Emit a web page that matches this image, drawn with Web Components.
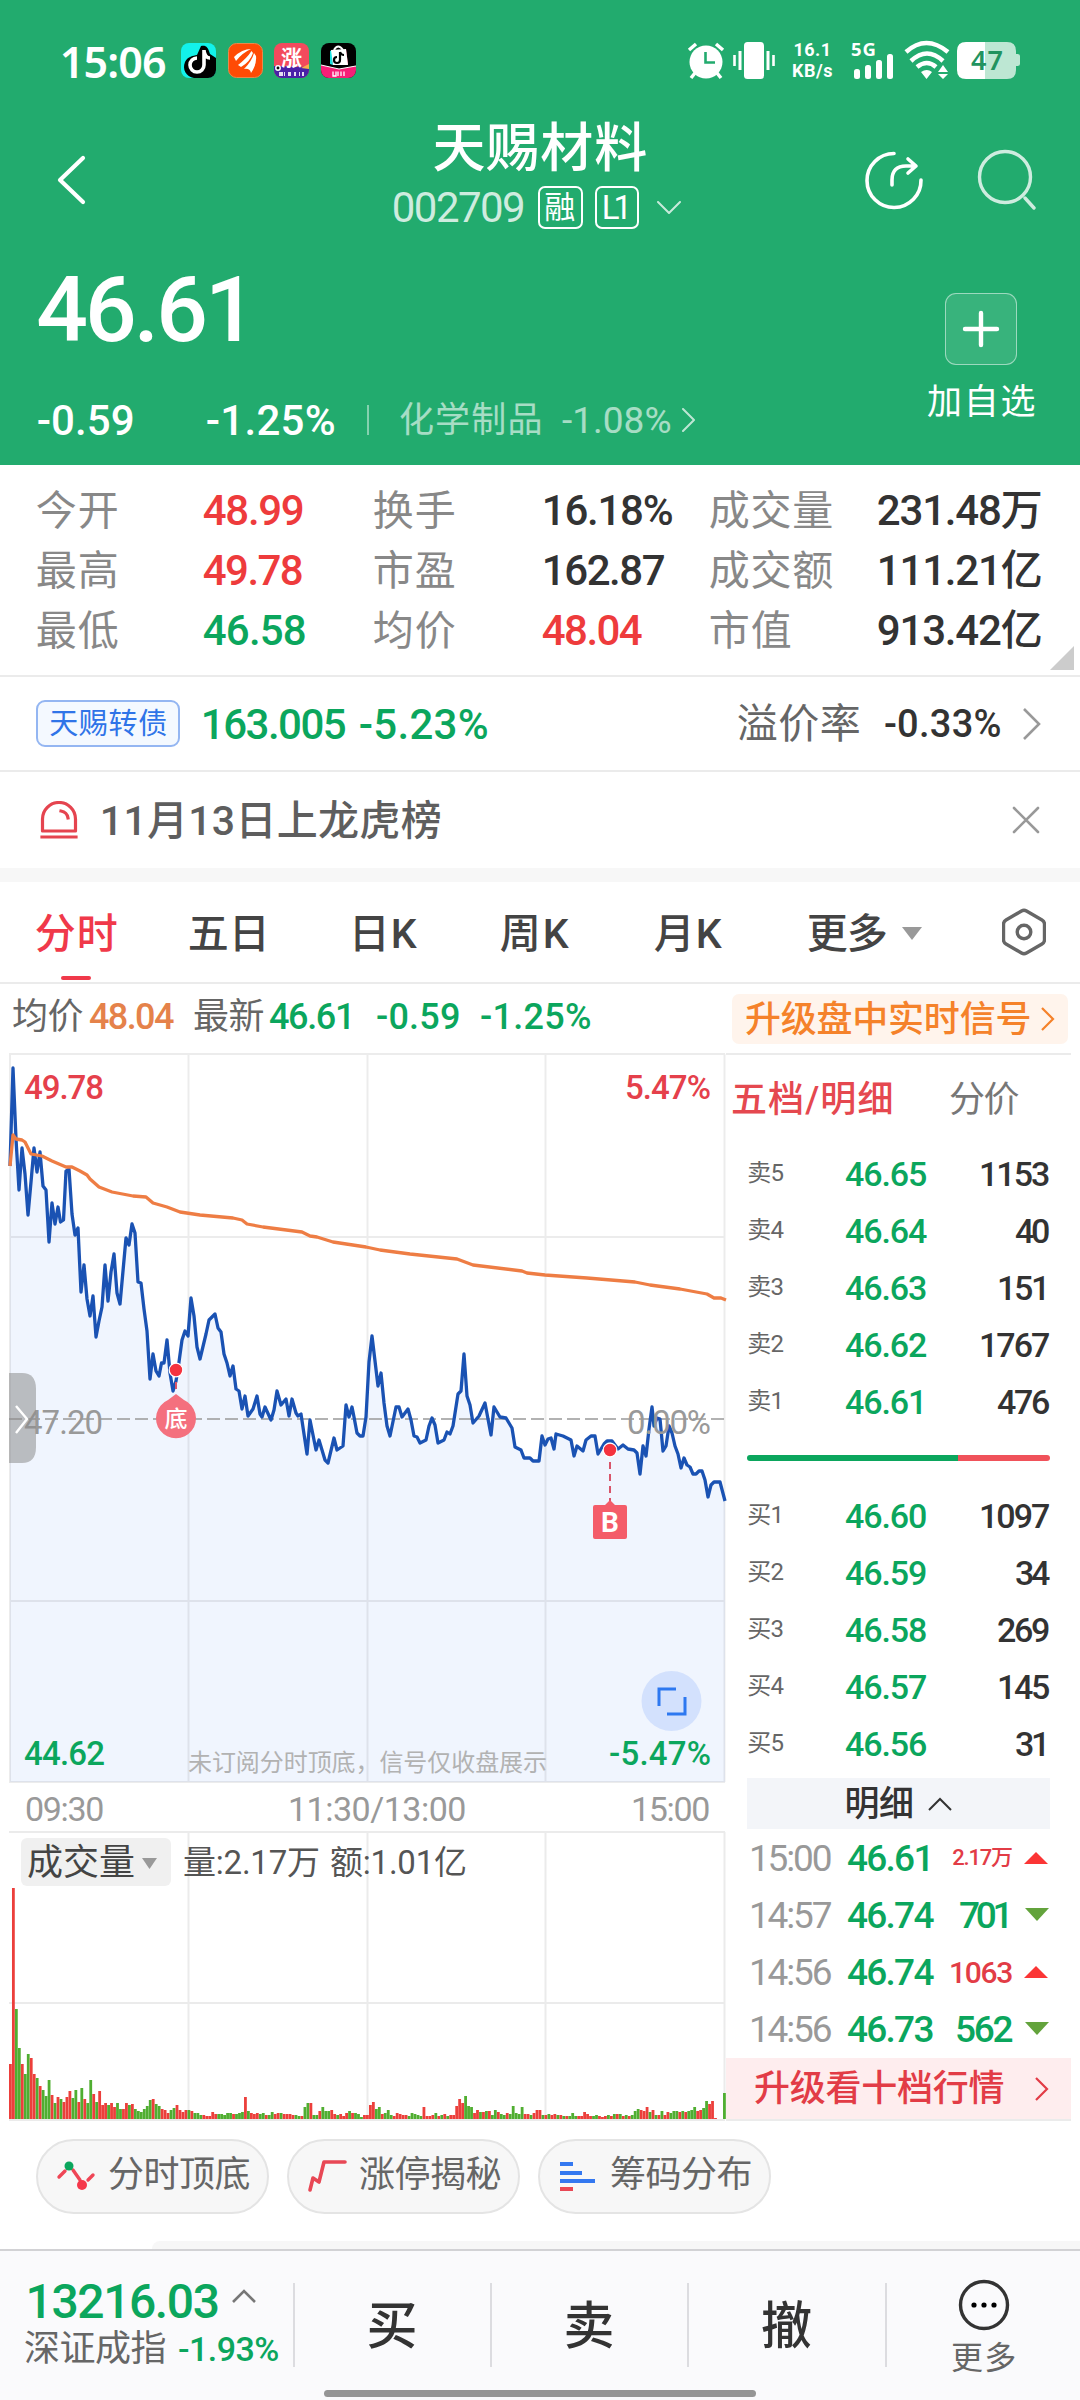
<!DOCTYPE html>
<html lang="zh-CN">
<head>
<meta charset="utf-8">
<title>天赐材料 002709</title>
<style>
    :root {
        --up: #ee3b3c;
        --down: #0ba65d;
        --head: #22ab6e;
        --ink: #333;
        --line: #ebebeb;
    }
    body {
        margin: 0;
        width: 1080px;
        height: 2400px;
        overflow: hidden;
        background: #fff;
        color: var(--ink);
        font-family: Roboto, "Noto Sans CJK SC", sans-serif;
        font-weight: 500;
        display: flex;
        flex-direction: column;
    }
</style>
</head>
<body>
<quote-header></quote-header>
<stat-grid></stat-grid>
<bond-row></bond-row>
<notice-row></notice-row>
<chart-tabs></chart-tabs>
<chart-legend></chart-legend>
<market-panel>
    <price-chart></price-chart>
    <time-axis></time-axis>
    <volume-chart></volume-chart>
    <order-book slot="side"></order-book>
</market-panel>
<tool-chips>
    <tool-chip label="分时顶底">
        <svg width="40" height="34" fill="none" stroke="#ef4656" stroke-width="3.4" stroke-linecap="round"><path d="M3 17l6-6M17 10l7 10M32 20l5-5"/><circle cx="13" cy="6" r="4.5" fill="#0ba65d" stroke="none"/><circle cx="26" cy="25" r="5" fill="#f5374a" stroke="none"/></svg>
    </tool-chip>
    <tool-chip label="涨停揭秘">
        <svg width="40" height="34" fill="none" stroke="#e84855" stroke-width="3.6" stroke-linecap="round" stroke-linejoin="round"><path d="M3 30l3-12 6 4 5-20h21"/></svg>
    </tool-chip>
    <tool-chip label="筹码分布">
        <svg width="40" height="34" stroke-width="4"><path stroke="#3478f0" d="M2 4h13M2 13h22M2 21h35"/><path stroke="#e84855" d="M2 29h13"/></svg>
    </tool-chip>
</tool-chips>
<bottom-bar></bottom-bar>

<script>
// Small helper: registers an element whose shadow root is a static template
function define(name, html) {
    const template = document.createElement('template');
    template.innerHTML = html;
    customElements.define(name, class extends HTMLElement {
        constructor() {
            super();
            this.attachShadow({ mode: 'open' });
            this.shadowRoot.appendChild(template.content.cloneNode(true));
        }
    });
}

// One line of text spread over a fixed width (w) at a given font size
class FitText extends HTMLElement {
    constructor() {
        super();
        this.attachShadow({ mode: 'open' });
        this.shadowRoot.innerHTML = `
            <style>
                :host { display: block; flex: none; white-space: nowrap; line-height: 1.2; }
                span { display: inline-block; margin-left: -0.03em; padding-top: 0.07em; }
            </style>
            <span><slot></slot></span>
        `;
    }

    connectedCallback() {
        const size = Number(this.getAttribute('size'));
        const width = Number(this.getAttribute('w'));
        this.style.fontSize = size + 'px';
        if (!width) return;
        this.style.width = width + 'px';
        const span = this.shadowRoot.querySelector('span');
        const count = this.textContent.length;
        const natural = span.getBoundingClientRect().width;
        if (count > 1) {
            span.style.letterSpacing = (width + size * 0.07 - natural) / (count - 1) + 'px';
        }
    }
}
customElements.define('fit-text', FitText);

define('status-bar', `
    <style>
        :host { display: flex; align-items: center; height: 120px; padding-left: 61px; color: #fff; font-family: "Noto Sans", "Open Sans", sans-serif; }
        svg { display: block; flex: none; overflow: visible; }
        .time { font-weight: 600; margin-right: 16px; }
        .apps { display: flex; gap: 11.5px; flex: none; }
        .right { display: flex; align-items: center; margin-left: 330px; }
        .speed { width: 46px; margin-left: 15px; text-align: center; font: 700 18px/21px Roboto, sans-serif; letter-spacing: .5px; }
    </style>
    <fit-text class="time" size="43" w="104">15:06</fit-text>
    <div class="apps">
        <svg width="35" height="35" viewBox="0 0 35 35">
            <clipPath id="a"><rect width="35" height="35" rx="8"/></clipPath>
            <g clip-path="url(#a)">
                <rect width="35" height="35" fill="#12f2ea"/>
                <path d="M20 3c5-1 7 1 9 8l6 4v20H13C5 34 1 26 4 19c3-6 8-6 12-7z" fill="#000"/>
                <path d="M23 7v15a7 7 0 1 1-7-7M23 8c1 5 3 7 6 7" fill="none" stroke="#fff" stroke-width="3.6"/>
            </g>
        </svg>
        <svg width="35" height="35" viewBox="0 0 35 35">
            <rect x=".5" y=".5" width="34" height="34" rx="8" fill="#ff4b05" stroke="#e8894c"/>
            <path d="M6 14Q14 6 23 6Q14 10 8 18zM10 22Q19 15 23.500 8L25 10Q22 19 13 24zM16 26Q24 18 26 10L28 13Q29 21 23 30Q22 25 16 26z" fill="#fff"/>
        </svg>
        <svg width="35" height="35" viewBox="0 0 35 35">
            <clipPath id="b"><rect width="35" height="35" rx="8"/></clipPath>
            <g clip-path="url(#b)">
                <rect width="35" height="35" fill="#f34a5d"/>
                <path d="M0 23l35 1v11H0z" fill="#4a22a8"/>
                <path d="M27 25l8-4v5z" fill="#f8b04a"/>
                <circle cx="4" cy="25" r="2.2" fill="#111" stroke="#fff" stroke-width="1.5"/>
                <path d="M5 31h4M10 31h1M14 31h3M20 31h2M25 31h1M28 31h2" stroke="#fff" stroke-width="4" opacity=".85"/>
            </g>
            <text x="7" y="22" font-size="21" font-weight="700" fill="#fff" font-family="Noto Sans CJK SC">涨</text>
        </svg>
        <svg width="35" height="35" viewBox="0 0 35 35">
            <clipPath id="c"><rect width="35" height="35" rx="8"/></clipPath>
            <g clip-path="url(#c)">
                <rect width="35" height="35" fill="#000"/>
                <path d="M13 7q4-7 9 0" fill="none" stroke="#fff" stroke-width="2"/>
                <path d="M9 8l2-1 1 15-3-1z" fill="#18e0e0"/><path d="M25 6l2 15-3 1z" fill="#f33b6c"/>
                <path d="M10 7l15-1 2 16H12z" fill="#fff"/>
                <path d="M19 9v8a3 3 0 1 1-3-3M19 9q1 3 4 3" fill="none" stroke="#000" stroke-width="2.2"/>
                <path d="M0 22l18 4 17-3v12H0z" fill="#f71f77"/>
                <path d="M0 22l18 4 17-3" fill="none" stroke="#fff"/>
                <path d="M12 28.500v4.500h3v-4.500M17 28.500v4.500M20 28.500v4.500M23 28.500v4.500" fill="none" stroke="#fff" stroke-width="1.300"/>
            </g>
        </svg>
    </div>
    <div class="right">
        <svg width="40" height="38" viewBox="0 0 40 38">
            <circle cx="20" cy="21" r="16.500" fill="#fff"/>
            <path d="M3 9l7-6M37 9l-7-6M9 32l-4 5M31 32l4 5" stroke="#fff" stroke-width="3.500"/>
            <path d="M19.500 11v10.500H29" fill="none" stroke="#22ab6e" stroke-width="2.600"/>
        </svg>
        <svg width="42" height="38" viewBox="0 0 42 38" style="margin-left:7px">
            <rect x="11" y="1" width="20" height="37" rx="3.500" fill="#fff"/>
            <path d="M7 10v19M35 10v19" stroke="#fff" stroke-width="3"/>
            <path d="M1.500 14v11M40.500 14v11" stroke="#fff" stroke-width="2.600"/>
        </svg>
        <div class="speed"><div>16.1</div><div>KB/s</div></div>
        <svg width="46" height="38" viewBox="0 0 46 38" style="margin-left:15px" fill="#fff">
            <text x="0" y="15" font-size="18.500" font-weight="700" textLength="25">5G</text>
            <rect x="3" y="28" width="6" height="10" rx="2.500"/><rect x="14" y="24" width="6" height="14" rx="2.500"/>
            <rect x="25" y="19" width="6" height="19" rx="2.500"/><rect x="36" y="13" width="6" height="25" rx="2.500"/>
        </svg>
        <svg width="46" height="38" viewBox="0 0 46 38" style="margin-left:7px">
            <path d="M2 11Q22-7 44 11M7 20Q23 5 39 20M13 26Q23 18 32 26" fill="none" stroke="#fff" stroke-width="4.500"/>
            <path d="M17 31q6-4 11 0l-5.500 7zM34 31l5-7 5 7zM34 33h10l-5 5z" fill="#fff"/>
        </svg>
        <svg width="64" height="38" viewBox="0 0 64 38" style="margin-left:7px">
            <path d="M28 1h22q9 0 9 9v3h1.500q2.500 0 2.500 2v8q0 2-2.500 2H59v4q0 9-9 9H28z" fill="#bde7d3"/>
            <path d="M28 1H9Q0 1 0 10v19q0 9 9 9h19z" fill="#fff"/>
            <text x="14" y="29" font-size="27" font-weight="600" fill="#22935f" textLength="32">47</text>
        </svg>
    </div>
`);

define('quote-header', `
    <style>
        :host { display: block; height: 465px; flex: none; background: var(--head); color: #fff; }
        svg { display: block; flex: none; fill: none; stroke: #fff; stroke-linecap: round; stroke-linejoin: round; }
        nav { display: grid; grid-template-columns: 393px 289px 1fr; height: 120px; align-items: center; }
        .title { height: 120px; }
        .name { height: 56px; display: flex; align-items: center; padding-left: 41px; }
        .sub { height: 62px; display: flex; align-items: center; color: rgba(255,255,255,.78); font-weight: 400; }
        .tag { box-sizing: border-box; width: 45px; height: 43px; border: 2px solid #fff; border-radius: 7px; color: #fff; display: flex; align-items: center; justify-content: center; }
        .actions { display: flex; gap: 51px; padding-left: 181px; }
        .quote { display: flex; }
        .left { width: 906px; }
        .price { height: 135px; display: flex; align-items: center; padding-left: 39px; }
        .change { height: 90px; display: flex; align-items: center; padding-left: 38px; }
        .sector { opacity: .6; font-weight: 400; }
        hr { width: 2px; height: 30px; margin: 0 31px 0 33px; border: 0; background: rgba(255,255,255,.45); }
        .add { display: flex; flex-direction: column; align-items: center; width: 150px; padding-top: 53px; font-weight: 400; }
        .plus { box-sizing: border-box; width: 72px; height: 72px; border: 1.500px solid rgba(255,255,255,.5); border-radius: 11px; background: rgba(255,255,255,.1); display: grid; place-items: center; margin-bottom: 15px; }
    </style>
    <status-bar></status-bar>
    <nav>
        <svg width="30" height="52" viewBox="0 0 30 52" stroke-width="4.200" style="margin-left:57px"><path d="M26 4L3 26l23 22"/></svg>
        <div class="title">
            <div class="name"><fit-text size="53" w="211">天赐材料</fit-text></div>
            <div class="sub">
                <fit-text size="42" w="131">002709</fit-text>
                <div class="tag" style="margin:0 12px 0 14px"><fit-text size="31" w="30">融</fit-text></div>
                <div class="tag"><fit-text size="33" w="28">L1</fit-text></div>
                <svg width="26" height="15" viewBox="0 0 26 15" stroke-width="2" style="margin-left:17px;opacity:.75"><path d="M2 2l11 11L24 2"/></svg>
            </div>
        </div>
        <div class="actions">
            <svg width="62" height="62" viewBox="0 0 62 62" stroke-width="3.600">
                <path d="M31 4.500A27 27 0 1 0 58 31"/><path d="M29 36v-5q0-14 14-14h9M45 10l8 7-8 7"/>
            </svg>
            <svg width="62" height="62" viewBox="0 0 62 62" stroke-width="3.400" opacity=".78"><circle cx="29" cy="28" r="25.500"/><path d="M49 49l9 10"/></svg>
        </div>
    </nav>
    <div class="quote">
        <div class="left">
            <div class="price"><fit-text size="91" w="214">46.61</fit-text></div>
            <div class="change">
                <fit-text size="42" w="95">-0.59</fit-text>
                <fit-text size="42" w="127" style="margin-left:74px">-1.25%</fit-text>
                <hr>
                <fit-text class="sector" size="35" w="141">化学制品</fit-text>
                <fit-text class="sector" size="37" w="107" style="margin-left:22px">-1.08%</fit-text>
                <svg width="16" height="26" viewBox="0 0 16 26" stroke-width="2" style="margin-left:11px;opacity:.7"><path d="M2 2l11 11L2 24"/></svg>
            </div>
        </div>
        <div class="add">
            <div class="plus"><svg width="38" height="38" viewBox="0 0 38 38" stroke-width="4.400"><path d="M19 3v32M3 19h32"/></svg></div>
            <fit-text size="35" w="106">加自选</fit-text>
        </div>
    </div>
`);

class StatGrid extends HTMLElement {
    constructor() {
        super();
        // label, value, value width, value colour
        const stats = [
            ['今开', '48.99', 99, 'var(--up)'], ['换手', '16.18%', 129, ''], ['成交量', '231.48万', 163, ''],
            ['最高', '49.78', 98, 'var(--up)'], ['市盈', '162.87', 121, ''], ['成交额', '111.21亿', 163, ''],
            ['最低', '46.58', 101, 'var(--down)'], ['均价', '48.04', 98, 'var(--up)'], ['市值', '913.42亿', 163, '']
        ];
        this.attachShadow({ mode: 'open' });
        this.shadowRoot.innerHTML = `
            <style>
                :host { box-sizing: border-box; flex: none; display: grid; grid-template-columns: 167px 170px 169px 167px 168px 1fr; grid-auto-rows: 60px; align-items: center; height: 212px; padding: 15px 0 0 37px; border-bottom: 2px solid var(--line); position: relative; }
                .label { color: #888; font-weight: 400; }
                i { position: absolute; right: 6px; bottom: 5px; border: 12px solid; border-color: transparent #ccc #ccc transparent; }
            </style>
            ${stats.map(([label, value, w, color]) => `
                <fit-text class="label" size="41" w="${label.length * 41.5 - 3}">${label}</fit-text>
                <fit-text size="42" w="${w}" style="color:${color}">${value}</fit-text>
            `).join('')}
            <i></i>
        `;
    }
}
customElements.define('stat-grid', StatGrid);

define('bond-row', `
    <style>
        :host { box-sizing: border-box; flex: none; display: flex; align-items: center; height: 95px; padding: 0 38px 0 36px; border-bottom: 2px solid var(--line); color: var(--down); }
        .tag { box-sizing: border-box; height: 47px; border: 2px solid #94b6f2; border-radius: 9px; background: #f4f9ff; color: #2f74e8; padding: 0 12px; display: flex; align-items: center; font-weight: 400; margin-right: 22px; }
        .label { margin-left: auto; color: #666; font-weight: 400; }
    </style>
    <div class="tag"><fit-text size="29" w="116">天赐转债</fit-text></div>
    <fit-text size="42" w="143">163.005</fit-text>
    <fit-text size="42" w="127" style="margin-left:15px">-5.23%</fit-text>
    <fit-text class="label" size="41" w="121">溢价率</fit-text>
    <fit-text size="38" w="115" style="margin:0 22px 0 26px;color:var(--ink)">-0.33%</fit-text>
    <svg width="20" height="34" fill="none" stroke="#999" stroke-width="2.600"><path d="M2 2l15 15L2 32"/></svg>
`);

define('notice-row', `
    <style>
        :host { flex: none; display: flex; align-items: center; height: 96px; padding: 0 40px; border-bottom: 14px solid #f7f7f7; color: #5e5e5e; }
        svg { fill: none; stroke: #999; stroke-width: 2.600; stroke-linecap: round; }
    </style>
    <svg width="38" height="38" style="stroke:#e5444f;stroke-width:3.200"><path d="M2.500 30V18a16 16 0 0 1 33 0v12zM2 36h34M21 10q6 1 7 7" stroke-linecap="square" stroke-linejoin="round"/></svg>
    <fit-text size="41" w="339" style="margin-left:23px">11月13日上龙虎榜</fit-text>
    <svg width="28" height="28" style="margin-left:auto"><path d="M2 2l24 24M26 2L2 26"/></svg>
`);

define('chart-tabs', `
    <style>
        :host { box-sizing: border-box; flex: none; display: flex; align-items: center; height: 102px; padding: 3px 34px 0 36px; border-bottom: 2px solid var(--line); color: #444; }
        .active { color: #f0394a; position: relative; }
        .active::after { content: ""; position: absolute; left: 25px; top: 69px; width: 30px; height: 4px; border-radius: 2px; background: #f0394a; }
        b { border: 10.500px solid transparent; border-top: 13px solid #999; border-bottom: 0; margin-left: 16px; }
    </style>
    <fit-text class="active" size="41" w="80">分时</fit-text>
    <fit-text size="41" w="79" style="margin-left:73px">五日</fit-text>
    <fit-text size="41" w="65" style="margin-left:82px">日K</fit-text>
    <fit-text size="41" w="66" style="margin-left:86px">周K</fit-text>
    <fit-text size="41" w="65" style="margin-left:88px">月K</fit-text>
    <fit-text size="41" w="78" style="margin-left:88px">更多</fit-text>
    <b></b>
    <svg width="44" height="48" style="margin-left:auto;margin-top:-3px" fill="none" stroke="#666" stroke-width="3.400" stroke-linejoin="round"><path d="M19.500 3q2.500-1.500 5 0l15.500 9q2.500 1.500 2.500 4v16q0 2.500-2.500 4l-15.500 9q-2.500 1.500-5 0L4 36q-2.500-1.500-2.500-4V16q0-2.500 2.500-4z"/><circle cx="22" cy="24" r="6.800"/></svg>
`);

define('chart-legend', `
    <style>
        :host { box-sizing: border-box; flex: none; display: flex; align-items: center; height: 70px; padding: 0 12px 0 13px; color: var(--down); }
        fit-text { margin-bottom: 5px; }
        .label { color: #666; font-weight: 400; }
        .signal { box-sizing: border-box; display: flex; align-items: center; width: 336px; height: 50px; margin-left: auto; padding-left: 14px; border-radius: 7px; background: #fff4ec; color: #f5822a; }
        .signal fit-text { margin: 0; }
    </style>
    <fit-text class="label" size="36" w="69">均价</fit-text>
    <fit-text size="36" w="83" style="margin-left:8px;color:#e5824a">48.04</fit-text>
    <fit-text class="label" size="36" w="69" style="margin-left:21px">最新</fit-text>
    <fit-text size="36" w="84" style="margin-left:7px">46.61</fit-text>
    <fit-text size="36" w="82" style="margin-left:23px">-0.59</fit-text>
    <fit-text size="36" w="109" style="margin-left:22px">-1.25%</fit-text>
    <div class="signal">
        <fit-text size="36" w="284">升级盘中实时信号</fit-text>
        <svg width="16" height="26" style="margin-left:10px" fill="none" stroke="#f5822a" stroke-width="2.200"><path d="M2 2l11 11L2 24"/></svg>
    </div>
`);

define('market-panel', `
    <style>
        :host { flex: none; display: flex; height: 1065px; padding-left: 9px; }
        .charts { width: 717px; display: flex; flex-direction: column; }
    </style>
    <div class="charts"><slot></slot></div>
    <slot name="side"></slot>
`);

// Intraday price, x/y in chart pixels
const pricePoints = `1,112 4,14 7,85 10,136 13,94 16,120 19,161 22,128 25,94 28,118 31,98 34,132 37,136 40,188 43,149 46,170 49,153
    51.5,168 54.5,166 57,117 60,115 63,160 66,181 69,174 72,238 75,211 78,245 81,262 84,242 87,283 90,267 93,253 96,211 99,247
    102,218 105,200 108,239 111,250 114,217 117,184 120,191 123,170 126,179 129,228 132,229 135,255 138,277 141,325 144,300
    147,317 150,322 152.5,309 155,309 158,286 161,319 164,337 167,327 170,308 173,286 176,277 179,282 182,244 185,262 188,293
    191,305 197,280 200,266 206,260 209,274 212,278 215,300 218,309 221,322 224,312 227,335 230,337 233,355 236,342 239,362
    244,355 248,342 251,360 253,363 256,353 262,366 265,356 268,337 272,351 277,345 280,362 283,345 287,359 289,362 292,360
    298,400 301,366 307,396 310,386 316,406 319,409 325,384 328,396 334,392 337,351 340,363 343,353 345,363 348,379 351,382
    354,382 357,363 360,308 363,282 369,332 372,319 375,349 378,372 381,382 387,353 390,353 393,363 399,355 402,366 405,382
    408,383 411,389 417,386 420,372 423,364 426,371 429,389 435,386 438,378 441,380 444,372 449,340 452,337 455,300 458,342
    461,351 464,369 470,362 476,349 482,381 485,353 491,363 497,364 503,374 506,393 512,396 515,404 521,404 524,407 530,407
    533,382 536,391 539,385 542,384 545,395 547,380 554,382 562,386 565,402 568,392 574,397 577,386 582,382 586,382 589,400
    595,390 598,387 603,387 609,395 614,391 619,395 625,396 628,399 631,420 634,392 637,402 640,375 643,353 645,372 648,364
    651,365 654,397 657,392 660,372 663,379 666,392 669,400 672,414 675,404 678,411 681,413 684,420 687,420 690,417 693,417
    696,426 699,443 702,431 705,428 711,428 716,447`;

const averagePoints = `1,112 4,81 7,85 13,86 16,88 22,100 33,102 43,107 57,113 63,113 71,117 78,121 81,125 90,133 103,138 124,142
    137,143 144,149 158,153 171,158 191,161 224,164 233,166 238,170 254,173 293,178 301,182 308,183 324,188 357,193 371,196
    401,200 448,205 464,211 513,217 518,219 536,221 578,224 626,228 641,231 671,235 698,240 705,244 712,244 717,246`;

define('price-chart', `
    <style>
        :host { display: block; height: 728px; }
        svg { display: block; overflow: visible; }
        text { font-size: 33px; }
    </style>
    <svg width="716" height="728" viewBox="0 0 716 728">
        <polygon points="${pricePoints} 716,728 1,728" fill="#f0f5fe"/>
        <path d="M0 0h716M1 0v728M179.500 0v728M358.500 0v728M536.500 0v728M715.500 0v728M0 183h716M0 547h716M0 728h716" fill="none" stroke="#000" stroke-opacity=".075" stroke-width="2"/>
        <path d="M0 365h716" stroke="#999" stroke-width="1.600" stroke-dasharray="13 5"/>
        <polyline points="${pricePoints}" fill="none" stroke="#1a52b3" stroke-width="3.300" stroke-linejoin="round"/>
        <polyline points="${averagePoints}" fill="none" stroke="#ee7d44" stroke-width="3.300" stroke-linejoin="round"/>
        <text x="15" y="45" textLength="80" fill="#e5404b">49.78</text>
        <text x="616" y="45" textLength="86" fill="#e5404b">5.47%</text>
        <text x="15" y="380" textLength="79" fill="#999" font-weight="400">47.20</text>
        <text x="618" y="380" textLength="84" fill="#999" font-weight="400">0.00%</text>
        <text x="15" y="711" textLength="81" fill="#0ba65d">44.62</text>
        <text x="600" y="711" textLength="102" fill="#0ba65d">-5.47%</text>
        <text x="179" y="717" textLength="359" fill="#b2b2b2" font-weight="400" style="font-size:24px">未订阅分时顶底，信号仅收盘展示</text>
        <path d="M167 316v24M601 396v52" stroke="#d8556a" stroke-width="2" stroke-dasharray="7 5"/>
        <circle cx="167" cy="316" r="6.800" fill="#f5333f" stroke="#fff" stroke-width="1.200"/>
        <circle cx="601" cy="396" r="6.800" fill="#f5333f" stroke="#fff" stroke-width="1.200"/>
        <path d="M167 340l8 6a20 20 0 1 1-16 0z" fill="#f4707e"/>
        <text x="155.500" y="373" fill="#fff" style="font-size:23px">底</text>
        <path d="M584 453q0-2 2-2h10l5-5 5 5h10q2 0 2 2v30q0 2-2 2h-30q-2 0-2-2z" fill="#f45c69"/>
        <text x="592" y="478" fill="#fff" font-weight="700" style="font-size:28px">B</text>
        <circle cx="662.500" cy="647" r="30" fill="#d3e1fd"/>
        <path d="M650 652v-17h17M676 643v17h-18" fill="none" stroke="#2d78f0" stroke-width="3"/>
        <path d="M0 319h13q14 0 14 16v58q0 16-14 16H0z" fill="#8c8c8c" fill-opacity=".55"/>
        <path d="M7 352l11 13-11 14" fill="none" stroke="#fff" stroke-width="2.400"/>
    </svg>
`);

define('time-axis', `
    <style>
        :host { display: flex; align-items: center; height: 50px; padding: 2px 17px 0; box-sizing: border-box; color: #999; font-weight: 400; }
    </style>
    <fit-text size="34" w="77">09:30</fit-text>
    <fit-text size="34" w="176" style="margin-left:186px">11:30/13:00</fit-text>
    <fit-text size="34" w="77" style="margin-left:auto">15:00</fit-text>
`);

class VolumeChart extends HTMLElement {
    constructor() {
        super();
        // One bar per minute: colour letter and height
        const bars = ('r55 r231 g110 g71 r55 g45 g65 r61 r45 g41 r33 g29 g23 g39 r24 g16 r22 g20 r17 r22 r28 g21 g29 r17 g31 r20 g16 g39 r25 g17 '
            + 'r28 r14 r16 g14 r16 r12 g16 g10 r10 r16 g14 r15 g10 g8 g7 g10 g13 g19 r20 g15 g13 r10 r9 r6 g9 g11 r14 r9 r7 r9 '
            + 'g9 r8 g6 g6 g4 r4 r3 r3 r7 r5 g5 g5 g4 g6 g6 r5 g5 g6 g7 r22 g8 r6 r5 r6 g5 g6 r4 g4 g7 r5 r6 g6 r5 r5 r5 r4 g4 g3 r3 '
            + 'g12 g16 r16 g4 g4 r8 g12 g8 g8 r9 r5 g4 r5 r3 r6 g8 r6 g6 g5 g2 r4 r4 r14 r17 g10 g12 r5 g6 g9 g4 r3 r6 r5 r4 r4 g3 '
            + 'g6 g5 g4 g3 r12 r3 r3 r4 g6 r3 g4 r5 g3 r4 r4 r13 r20 r16 g23 g13 g12 r6 r9 g7 r7 g8 r8 g4 g9 r7 g5 g4 r6 g5 g13 g6 g5 g12 '
            + 'r5 r5 g4 r6 r9 r9 g4 r4 g5 r4 r5 g4 r4 g3 r3 g3 g6 g3 r3 r3 r7 r5 r3 g3 g4 r3 r2 r3 g4 r3 g5 r5 g5 r3 g4 r3 g4 g8 g10 r9 r8 '
            + 'r12 g7 r9 g4 r4 g8 r4 r7 g6 g8 g8 r7 g8 r7 g8 g9 g12 r8 r9 g11 g18 r15 r18 r1 g0 g0 g26').split(' ');
        const step = 717 / bars.length;
        this.attachShadow({ mode: 'open' });
        this.shadowRoot.innerHTML = `
            <style>
                :host { display: block; height: 287px; }
                svg { display: block; overflow: visible; }
            </style>
            <svg width="716" height="287" viewBox="0 0 716 287">
                <path d="M0 0h716M179.500 0v287M358.500 0v287M536.500 0v287M715.500 0v287M0 171h716M0 288h716" fill="none" stroke="#ebebeb" stroke-width="2"/>
                ${bars.map((bar, i) => `<rect x="${(i * step).toFixed(2)}" y="${287 - bar.slice(1)}" width="2.800" height="${bar.slice(1)}" fill="${bar[0] === 'r' ? '#ec3f3b' : '#50ae31'}"/>`).join('')}
                <rect x="12" y="6" width="150" height="48" rx="6" fill="#f0f0f0"/>
                <text x="18" y="43" font-size="36" font-weight="400" fill="#444" textLength="108">成交量</text>
                <path d="M133 26h15l-7.500 11z" fill="#999"/>
                <text x="174" y="42" font-size="33" font-weight="400" fill="#555" textLength="137">量:2.17万</text>
                <text x="321" y="42" font-size="33" font-weight="400" fill="#555" textLength="137">额:1.01亿</text>
            </svg>
        `;
    }
}
customElements.define('volume-chart', VolumeChart);

class OrderBook extends HTMLElement {
    constructor() {
        super();
        const sells = [['卖5', '46.65', '1153'], ['卖4', '46.64', '40'], ['卖3', '46.63', '151'], ['卖2', '46.62', '1767'], ['卖1', '46.61', '476']];
        const buys = [['买1', '46.60', '1097'], ['买2', '46.59', '34'], ['买3', '46.58', '269'], ['买4', '46.57', '145'], ['买5', '46.56', '31']];
        // time, price, volume, volume font size, volume width, direction
        const ticks = [
            ['15:00', '46.61', '2.17万', 22, 59, 'up'], ['14:57', '46.74', '701', 37, 52, 'down'],
            ['14:56', '46.74', '1063', 30, 62, 'up'], ['14:56', '46.73', '562', 37, 56, 'down']
        ];
        const level = ([label, price, qty]) => `
            <div class="row level">
                <fit-text class="label" size="24" w="35">${label}</fit-text>
                <fit-text class="price" size="34" w="80">${price}</fit-text>
                <fit-text class="qty" size="34" w="${qty.length * 18 - 3}">${qty}</fit-text>
            </div>`;
        this.attachShadow({ mode: 'open' });
        this.shadowRoot.innerHTML = `
            <style>
                :host { display: block; width: 345px; border-top: 2px solid var(--line); margin-top: -1px; }
                .tabs { display: flex; align-items: center; height: 89.500px; padding-left: 6px; color: #e5484f; }
                .row { display: flex; align-items: center; height: 57px; }
                .level { padding: 0 22px; }
                .label { color: #666; font-weight: 400; }
                .price { color: var(--down); margin-left: 63px; }
                .qty { margin-left: auto; }
                .ratio { width: 303px; height: 6px; border-radius: 3px; margin-left: 21px; background: linear-gradient(to right, #0ba65d 211px, #f0525a 211px); }
                .detail { display: flex; align-items: center; justify-content: center; gap: 15px; width: 303px; height: 51px; margin: 6.500px 0 0 21px; background: #f3f5f9; }
                .time { color: #999; font-weight: 400; margin-left: 24px; }
                .tick .price { margin-left: 17px; }
                .tick b { width: 24px; margin: 0 23px 0 12px; }
                .tick b::before { content: ""; display: block; width: 0; border: 12px solid transparent; }
                .up b::before { border-top: 0; border-bottom: 12px solid #fb3535; }
                .down b::before { border-bottom: 0; border-top: 13px solid #63a33c; margin-left: 1px; }
                .up .qty { color: #e23c46; }
                .down .qty { color: var(--down); }
                .more { display: flex; align-items: center; justify-content: space-between; height: 61px; padding: 0 21px 0 29px; margin-top: 1px; background: #feedee; border-bottom: 2px solid var(--line); color: #e23c46; }
            </style>
            <div class="tabs">
                <fit-text size="36" w="160">五档/明细</fit-text>
                <fit-text size="36" w="68" style="margin-left:58px;color:#777;font-weight:400">分价</fit-text>
            </div>
            ${sells.map(level).join('')}
            <div class="row"><div class="ratio"></div></div>
            ${buys.map(level).join('')}
            <div class="detail">
                <fit-text size="35" w="67">明细</fit-text>
                <svg width="24" height="14" fill="none" stroke="#333" stroke-width="2"><path d="M1 13L12 2l11 11"/></svg>
            </div>
            ${ticks.map(([time, price, qty, size, w, dir]) => `
                <div class="row tick ${dir}">
                    <fit-text class="time" size="37" w="81">${time}</fit-text>
                    <fit-text class="price" size="37" w="85">${price}</fit-text>
                    <fit-text class="qty" size="${size}" w="${w}">${qty}</fit-text>
                    <b></b>
                </div>`).join('')}
            <div class="more">
                <fit-text size="36" w="248">升级看十档行情</fit-text>
                <svg width="16" height="26" fill="none" stroke="#e23c46" stroke-width="2.200"><path d="M2 2l11 11L2 24"/></svg>
            </div>
        `;
    }
}
customElements.define('order-book', OrderBook);

class ToolChip extends HTMLElement {
    constructor() {
        super();
        this.attachShadow({ mode: 'open' });
        this.shadowRoot.innerHTML = `
            <style>
                :host { box-sizing: border-box; display: flex; align-items: center; width: 233px; height: 75px; padding: 0 0 3px 18px; border: 2px solid #e4e4e4; border-radius: 38px; background: #f7f7f7; color: #666; font-weight: 400; }
                slot { display: flex; margin-top: 4px; }
                fit-text { margin: -2px 0 0 13px; }
            </style>
            <slot></slot>
            <fit-text size="36" w="140">${this.getAttribute('label')}</fit-text>
        `;
    }
}
customElements.define('tool-chip', ToolChip);

define('tool-chips', `
    <style>
        :host { flex: none; height: 130px; display: flex; flex-direction: column; justify-content: space-between; }
        .chips { display: flex; gap: 18px; padding: 20px 0 0 36px; }
        .sheet { height: 8px; margin-left: 152px; border-top-left-radius: 8px; background: #f7f7f7; }
    </style>
    <div class="chips"><slot></slot></div>
    <div class="sheet"></div>
`);

define('bottom-bar', `
    <style>
        :host { box-sizing: border-box; flex: none; position: relative; display: grid; grid-template-columns: 293px 197px 197px 198px 1fr; height: 151px; border-top: 2px solid #d2d2d5; background: #fafafc; }
        .index { padding: 20px 0 0 27px; color: var(--down); }
        .line { display: flex; align-items: center; }
        .trade { height: 84px; margin-top: 32px; border-left: 2px solid #dcdce0; display: grid; place-items: center; }
        .more { height: 84px; margin-top: 32px; border-left: 2px solid #dcdce0; color: #666; font-weight: 400; display: flex; flex-direction: column; align-items: center; }
        .more svg { flex: none; margin: -4px 0 6px; }
        .home { position: absolute; left: 324px; top: 139px; width: 432px; height: 7px; border-radius: 4px; background: #959595; }
    </style>
    <div class="index">
        <div class="line" style="height:58px">
            <fit-text size="48" w="191">13216.03</fit-text>
            <svg width="26" height="16" style="margin:-8px 0 0 13px" fill="none" stroke="#777" stroke-width="2.600"><path d="M2 14L13 3l11 11"/></svg>
        </div>
        <div class="line" style="height:38px">
            <fit-text size="36" w="140" style="color:#666;font-weight:400;margin-left:-2px">深证成指</fit-text>
            <fit-text size="34" w="99" style="margin-left:14px">-1.93%</fit-text>
        </div>
    </div>
    <div class="trade"><fit-text size="51" w="49">买</fit-text></div>
    <div class="trade"><fit-text size="51" w="49">卖</fit-text></div>
    <div class="trade"><fit-text size="51" w="49">撤</fit-text></div>
    <div class="more">
        <svg width="52" height="52"><circle cx="26" cy="26" r="23.500" fill="none" stroke="#333" stroke-width="3.400"/><circle cx="16" cy="26" r="2.600"/><circle cx="26" cy="26" r="2.600"/><circle cx="36" cy="26" r="2.600"/></svg>
        <fit-text size="32" w="63">更多</fit-text>
    </div>
    <div class="home"></div>
`);
</script>
</body>
</html>
